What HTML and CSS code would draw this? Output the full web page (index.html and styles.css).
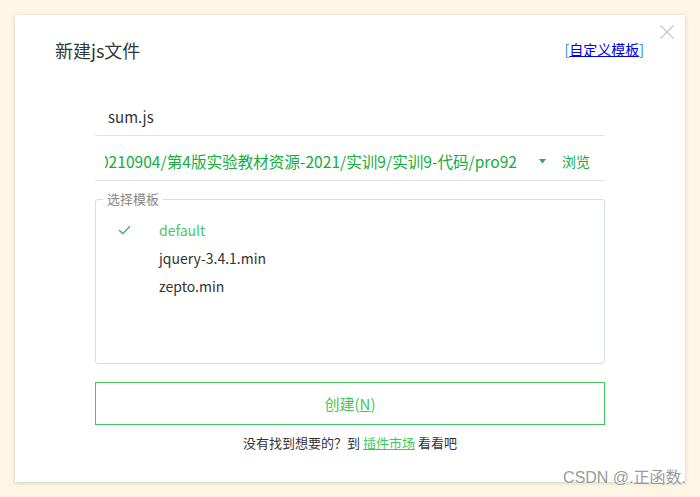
FILE: index.html
```html
<!DOCTYPE html>
<html lang="zh-CN">
<head>
  <meta charset="UTF-8">
  <title>新建js文件</title>
  <link rel="stylesheet" href="styles.css">
</head>
<body>

  <!-- dialog -->
  <div class="dialog">
    <div class="close">
      <svg width="14" height="14" viewBox="0 0 14 14">
        <path d="M0.5 0.5 L13.5 13.5 M13.5 0.5 L0.5 13.5" stroke="#c4c4c4" stroke-width="1.1" fill="none"/>
      </svg>
    </div>

    <div class="header">
      <div class="title">新建js文件</div>
      <div class="custom"><span class="bracket">[</span><a href="#">自定义模板</a><span class="bracket">]</span></div>
    </div>

    <div class="form">
      <div class="row name-row">sum.js</div>

      <div class="row path-row">
        <div class="path"><span>D:/20210904/第4版实验教材资源-2021/实训9/实训9-代码/pro92</span></div>
        <svg class="caret" width="7" height="5" viewBox="0 0 7 5"><path d="M0 0 L7 0 L3.5 4.5 Z" fill="#3aa35a"/></svg>
        <span class="browse">浏览</span>
      </div>

      <fieldset class="templates">
        <legend>选择模板</legend>
        <ul class="list">
          <li class="item active">
            <span class="check">
              <svg width="13" height="10" viewBox="0 0 13 10"><path d="M1 5 L4.8 8.6 L12 1.2" stroke="#4fb373" stroke-width="1.5" fill="none"/></svg>
            </span>
            <span>default</span>
          </li>
          <li class="item"><span class="check"></span><span>jquery-3.4.1.min</span></li>
          <li class="item"><span class="check"></span><span>zepto.min</span></li>
        </ul>
      </fieldset>

      <button class="create">创建(<u>N</u>)</button>

      <p class="hint">没有找到想要的？到 <a href="#">插件市场</a> 看看吧</p>
    </div>
  </div>

  <div class="watermark">CSDN @.正函数.</div>

</body>
</html>
```

FILE: styles.css
```css
/* page */
html, body {
  margin: 0;
  padding: 0;
}

body {
  position: relative;
  height: 497px;
  overflow: hidden;
  background: #fdf6e4;
  padding: 15px;
  box-sizing: border-box;
  font-family: "Noto Sans CJK SC", "Noto Sans", sans-serif;
  color: #333;
}

/* dialog box */
.dialog {
  position: relative;
  width: 670px;
  height: 467px;
  background: #fff;
  box-shadow: 0 1px 4px rgba(0, 0, 0, 0.18);
}

.close {
  position: absolute;
  top: 10px;
  right: 11px;
  width: 14px;
  height: 14px;
}
.close svg { display: block; }

.header {
  display: flex;
  justify-content: space-between;
  align-items: flex-start;
  padding: 23px 41px 0 40px;
  height: 62px;
}

.title {
  font-size: 18px;
  line-height: 24px;
  color: #2f3a35;
}

.custom {
  font-size: 14px;
  line-height: 22px;
}
.custom a {
  color: #0000ee;
  text-decoration: underline;
}
.custom .bracket {
  color: #1b8fb0;
}

/* form column */
.form {
  margin: 0 80px;
}

.row {
  border-bottom: 1px solid #e3e3e3;
  font-size: 15px;
  line-height: 24px;
}

.name-row {
  padding: 5px 13px 6px;
  color: #333;
}

.path-row {
  display: flex;
  align-items: center;
  padding: 13px 15px 7px 10px;
}

.path {
  flex: 1;
  overflow: hidden;
  white-space: nowrap;
  display: flex;
  justify-content: flex-end;
  color: #14ad3c;
  font-size: 15.6px;
  margin-right: 22px;
}
.path span { flex: none; }

.caret {
  margin-right: 16px;
  flex: none;
}

.browse {
  color: #14ad3c;
  font-size: 14px;
}

/* template list */
.templates {
  margin: 10px 0 0;
  padding: 0;
  border: 1px solid #d5dde5;
  border-radius: 3px;
}

.templates legend {
  margin-left: 7px;
  padding: 0 4px;
  font-size: 13px;
  line-height: 16px;
  color: #888;
}

.list {
  list-style: none;
  margin: 9px 0 0;
  padding: 0 0 0 22px;
  height: 147px;
}

.item {
  display: flex;
  align-items: center;
  height: 28px;
  font-size: 14px;
  color: #333;
}
.item.active { color: #4cc46a; }

.check {
  width: 41px;
  flex: none;
  display: flex;
}

/* button */
.create {
  display: block;
  width: 100%;
  height: 43px;
  margin-top: 18px;
  background: #fff;
  border: 1px solid #3fc95a;
  color: #3fc95a;
  font-family: inherit;
  font-size: 15px;
  cursor: pointer;
}

.hint {
  margin: 9px 0 0;
  text-align: center;
  font-size: 13px;
  line-height: 18px;
  color: #333;
}
.hint a {
  color: #3fc95a;
  text-decoration: underline;
}

/* watermark over the corner */
.watermark {
  position: absolute;
  right: 14px;
  bottom: 9px;
  font-size: 16px;
  line-height: 20px;
  color: #9a9a9a;
  text-shadow: 0 0 2px #fff;
  font-family: "Liberation Sans", "Noto Sans CJK SC", sans-serif;
}
```
